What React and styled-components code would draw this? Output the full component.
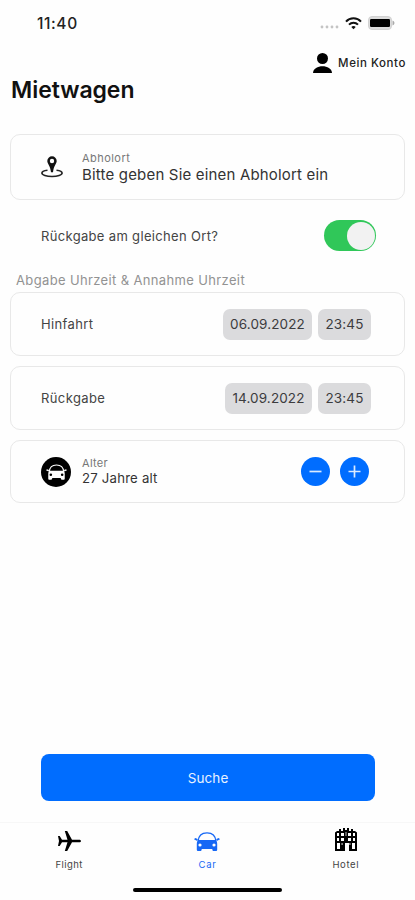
import React, { useState } from 'react';
import styled, { createGlobalStyle } from 'styled-components';

const App = () => {
  const [age, setAge] = useState(27);
  const [sameLocation, setSameLocation] = useState(true);

  return (
    <Screen>
      <GlobalStyle />
      <StatusBar>
        <Clock>11:40</Clock>
        <StatusIcons>
          <SignalIcon />
          <WifiIcon />
          <BatteryIcon />
        </StatusIcons>
      </StatusBar>
      <Header>
        <Account>
          <PersonIcon />
          <AccountText>Mein Konto</AccountText>
        </Account>
        <Heading>Mietwagen</Heading>
      </Header>

      <LocationCard>
        <IconSlot>
          <PinIcon />
        </IconSlot>
        <Field>
          <FieldLabel $spacing="0.45px">Abholort</FieldLabel>
          <LocationValue>Bitte geben Sie einen Abholort ein</LocationValue>
        </Field>
      </LocationCard>

      <ToggleRow>
        <RowText $spacing="0.33px">Rückgabe am gleichen Ort?</RowText>
        <Toggle $on={sameLocation} onClick={() => setSameLocation(!sameLocation)}>
          <Knob />
        </Toggle>
      </ToggleRow>

      <SectionTitle>Abgabe Uhrzeit &amp; Annahme Uhrzeit</SectionTitle>

      <DateCard>
        <RowText $spacing="0.35px">Hinfahrt</RowText>
        <Chips>
          <Chip $width={89}>06.09.2022</Chip>
          <Chip $width={53}>23:45</Chip>
        </Chips>
      </DateCard>
      <DateCard>
        <RowText $spacing="0.4px">Rückgabe</RowText>
        <Chips>
          <Chip $width={87}>14.09.2022</Chip>
          <Chip $width={53}>23:45</Chip>
        </Chips>
      </DateCard>
      <AgeCard>
        <IconSlot>
          <CarBadge>
            <CarIcon width={21} height={16} />
          </CarBadge>
        </IconSlot>
        <Field>
          <FieldLabel $spacing="0.3px">Alter</FieldLabel>
          <AgeValue>{age} Jahre alt</AgeValue>
        </Field>
        <Stepper>
          <StepButton onClick={() => setAge(age - 1)}>
            <StepIcon />
          </StepButton>
          <StepButton onClick={() => setAge(age + 1)}>
            <StepIcon plus />
          </StepButton>
        </Stepper>
      </AgeCard>

      <SearchButton>Suche</SearchButton>

      <TabBar>
        <Tab>
          <PlaneIcon />
          <TabLabel $spacing="0.45px">Flight</TabLabel>
        </Tab>
        <Tab $active>
          <CarIcon width={26} height={19} />
          <TabLabel $spacing="0.7px">Car</TabLabel>
        </Tab>
        <Tab>
          <HotelIcon />
          <TabLabel $spacing="0.65px">Hotel</TabLabel>
        </Tab>
      </TabBar>
      <HomeIndicator />
    </Screen>
  );
};

const SignalIcon = () => (
  <svg width="19" height="18" viewBox="0 0 19 18" fill="#c4c4c4">
    <circle cx="2" cy="13" r="1.4" />
    <circle cx="7" cy="13" r="1.4" />
    <circle cx="12" cy="13" r="1.4" />
    <circle cx="17" cy="13" r="1.4" />
  </svg>
);

const WifiIcon = () => (
  <svg width="17" height="13" viewBox="0 0 17 13" fill="none" stroke="#111" strokeWidth="2">
    <path d="M1 4.6C5 .2 12 .2 16 4.6" />
    <path d="M4 7.6c2.5-2.6 6.5-2.6 9 0" />
    <path d="M8.5 12.3 6.3 9.900c1.200-1.300 3.200-1.300 4.400 0z" fill="#111" stroke="none" />
  </svg>
);

const BatteryIcon = () => (
  <svg width="27" height="14" viewBox="0 0 27 14">
    <rect x=".5" y=".5" width="23" height="13" rx="3.5" fill="#dcdcdc" stroke="#d2d2d2" />
    <rect x="2" y="3" width="20" height="8" rx="1.2" fill="#000" />
    <path d="M24.500 4.500c2.600.8 2.600 4.200 0 5z" fill="#aaa" />
  </svg>
);

const PersonIcon = () => (
  <svg width="19" height="20" viewBox="0 0 19 20" fill="#000">
    <circle cx="9.5" cy="5.5" r="5.5" />
    <path d="M0 20c.3-9 18.700-9 19 0z" />
  </svg>
);

const PinIcon = () => (
  <svg width="22" height="22" viewBox="0 0 22 22">
    <path
      d="M6.500 14.200C2.800 14.700.9 15.700.9 17c0 2 4.500 3.500 10.100 3.500s10.100-1.500 10.100-3.500c0-1.300-1.900-2.300-5.600-2.800"
      fill="none"
      stroke="#222"
      strokeWidth="1.6"
    />
    <path
      fillRule="evenodd"
      d="M11 .3a4.700 4.700 0 0 0-4.700 4.700c0 2.800 3 4.500 3.700 11.200h2c.7-6.700 3.700-8.400 3.700-11.200A4.700 4.700 0 0 0 11 .3zm0 2.500a2.200 2.200 0 1 1 0 4.400 2.200 2.200 0 0 1 0-4.400z"
      fill="#111"
    />
  </svg>
);

const CarIcon = ({ width, height }) => (
  <svg width={width} height={height} viewBox="0 0 26 19" fill="currentColor">
    <path d="M4.200 9C4.500 3.500 7 .8 13 .8S21.500 3.500 21.800 9" fill="none" stroke="currentColor" strokeWidth="1.300" />
    <path d="M0 7.200 1.200 6l2.600 1-.6 2zM26 7.200 24.800 6l-2.600 1 .6 2z" />
    <path
      fillRule="evenodd"
      d="M4.500 8h17c1.300.8 1.700 2 1.700 4v5.500c0 1.200-.5 1.500-1.500 1.500h-2c-1 0-1.400-.5-1.400-2H7.700c0 1.500-.4 2-1.400 2h-2c-1 0-1.500-.3-1.500-1.500V12c0-2 .4-3.200 1.700-4zM6 11.400a1.600 1.600 0 1 0 0 3.200 1.600 1.600 0 0 0 0-3.200zm14 0a1.600 1.600 0 1 0 0 3.200 1.600 1.600 0 0 0 0-3.200z"
    />
  </svg>
);

const PlaneIcon = () => (
  <svg width="23" height="20" viewBox="0 0 23 20" fill="#000">
    <path d="M0 5h1.700L4 8.700h5.500L6.800 0h2.400L14 8.700h7c1.300 0 2 .6 2 1.300s-.7 1.300-2 1.300h-7L9.200 20H6.800l2.700-8.700H4L1.700 15H0l1-5z" />
  </svg>
);

const HotelIcon = () => (
  <svg width="22" height="23" viewBox="0 0 22 23">
    <path d="M0 4.500 2 3h2V1h2v2h2V0h2v2h2V0h2v3h2V1h2v2h2l2 1.500V23h-8v-8h-4v8H0z" fill="#000" />
    <path
      d="M2 5h2v3H2zM6 5h3v3H6zM13 5h3v3h-3zM18 5h2v3h-2zM2 10h2v3H2zM6 10h3v3H6zM13 10h3v3h-3zM18 10h2v3h-2zM2 15h3v6H2zM17 15h3v6h-3z"
      fill="#fff"
    />
    <path d="M6.500 15h1.200v2H6.500zM14.300 15h1.200v2h-1.200zM10.500 4h1v4h-1z" fill="#bbb" />
  </svg>
);

const StepIcon = ({ plus }) => (
  <svg width="13" height="13" viewBox="0 0 13 13" stroke="#d9eaff" strokeWidth="1.7">
    <path d={plus ? 'M.5 6.500h12M6.500 .5v12' : 'M.5 6.500h12'} />
  </svg>
);

const GlobalStyle = createGlobalStyle`
  * {
    box-sizing: border-box;
  }

  body {
    margin: 0;
    background: #fefefe;
    font-family: Inter, 'Liberation Sans', sans-serif;
  }

  button {
    border: 0;
    padding: 0;
    font-family: inherit;
    cursor: pointer;
  }

  svg {
    display: block;
    flex-shrink: 0;
  }
`;

const Screen = styled.div`
  display: flex;
  flex-direction: column;
  width: 415px;
  height: 900px;
  overflow: hidden;
  background: #fefefe;
  color: #333;
  white-space: nowrap;
`;

const StatusBar = styled.div`
  display: flex;
  align-items: center;
  justify-content: space-between;
  height: 46px;
  padding: 0 20px 0 37px;
`;

const Clock = styled.span`
  font-size: 15.5px;
  font-weight: 500;
  letter-spacing: 0.6px;
  color: #222;
`;

const StatusIcons = styled.div`
  display: flex;
  align-items: center;
  gap: 6px;
`;

const Header = styled.header`
  display: flex;
  flex-direction: column;
  height: 88px;
  padding: 6px 9px 0 11px;
`;

const Account = styled.div`
  display: flex;
  align-items: center;
  align-self: flex-end;
  gap: 6px;
  height: 22px;
`;

const AccountText = styled.span`
  font-size: 11.5px;
  font-weight: 500;
  letter-spacing: 0.57px;
  color: #222;
`;

const Heading = styled.h1`
  margin: 1px 0 0;
  font-size: 23px;
  line-height: 30px;
  font-weight: 600;
  letter-spacing: -0.05px;
  color: #111;
`;

const Card = styled.div`
  display: flex;
  flex-shrink: 0;
  align-items: center;
  margin: 0 10px;
  padding: 0 33px 0 30px;
  border: 1.5px solid #e8e8e8;
  border-radius: 10px;
`;

const LocationCard = styled(Card)`
  height: 66px;
`;

const DateCard = styled(Card)`
  justify-content: space-between;
  height: 64px;
  margin-bottom: 10px;
`;

const AgeCard = styled(Card)`
  height: 63px;
  padding-right: 35px;
`;

const IconSlot = styled.div`
  width: 41px;
`;

const Field = styled.div`
  display: flex;
  flex-direction: column;
`;

const FieldLabel = styled.span`
  font-size: 11px;
  line-height: 14px;
  letter-spacing: ${(props) => props.$spacing};
  color: #777;
`;

const LocationValue = styled.span`
  font-size: 15px;
  line-height: 19px;
  letter-spacing: 0.18px;
`;

const AgeValue = styled.span`
  font-size: 13.2px;
  line-height: 17px;
  letter-spacing: 0.2px;
`;

const ToggleRow = styled.div`
  display: flex;
  align-items: center;
  justify-content: space-between;
  height: 71px;
  padding: 0 39px 0 41px;
`;

const RowText = styled.span`
  font-size: 13px;
  letter-spacing: ${(props) => props.$spacing};
  color: #444;
`;

const Toggle = styled.button`
  display: flex;
  justify-content: ${(props) => (props.$on ? 'flex-end' : 'flex-start')};
  width: 52px;
  height: 31px;
  padding: 1.5px;
  border-radius: 16px;
  background: ${(props) => (props.$on ? '#30c759' : '#ddd')};
`;

const Knob = styled.span`
  width: 28px;
  height: 28px;
  border-radius: 50%;
  background: #f2f2f2;
`;

const SectionTitle = styled.div`
  height: 21px;
  padding-left: 16px;
  font-size: 13px;
  line-height: 18px;
  letter-spacing: 0.36px;
  color: #929292;
`;

const Chips = styled.div`
  display: flex;
  gap: 6px;
`;

const Chip = styled.span`
  display: flex;
  align-items: center;
  justify-content: center;
  width: ${(props) => props.$width}px;
  height: 31px;
  border-radius: 7px;
  background: #dbdbdd;
  font-size: 13.5px;
  letter-spacing: 0.12px;
  color: #3c3c3e;
`;

const CarBadge = styled.div`
  display: flex;
  align-items: center;
  justify-content: center;
  width: 30px;
  height: 30px;
  border-radius: 50%;
  background: #000;
  color: #fff;
`;

const Stepper = styled.div`
  display: flex;
  gap: 10px;
  margin-left: auto;
`;

const StepButton = styled.button`
  display: flex;
  align-items: center;
  justify-content: center;
  width: 29px;
  height: 29px;
  border-radius: 50%;
  background: #006dff;
`;

const SearchButton = styled.button`
  flex-shrink: 0;
  height: 47px;
  margin: auto 40px 21px 41px;
  border-radius: 8px;
  background: #006dff;
  font-size: 13.5px;
  letter-spacing: 0.1px;
  color: #e8f2ff;
`;

const TabBar = styled.nav`
  display: flex;
  flex-shrink: 0;
  height: 66px;
  border-top: 1px solid #f7f7f7;
`;

const Tab = styled.div`
  display: flex;
  flex: 1;
  flex-direction: column;
  align-items: center;
  justify-content: flex-end;
  gap: 8px;
  height: 48px;
  color: ${(props) => (props.$active ? '#1768f5' : '#444')};
`;

const TabLabel = styled.span`
  font-size: 9.5px;
  line-height: 12px;
  letter-spacing: ${(props) => props.$spacing};
`;

const HomeIndicator = styled.div`
  flex-shrink: 0;
  align-self: center;
  width: 149px;
  height: 4px;
  margin-bottom: 8px;
  border-radius: 2px;
  background: #000;
`;

export default App;
